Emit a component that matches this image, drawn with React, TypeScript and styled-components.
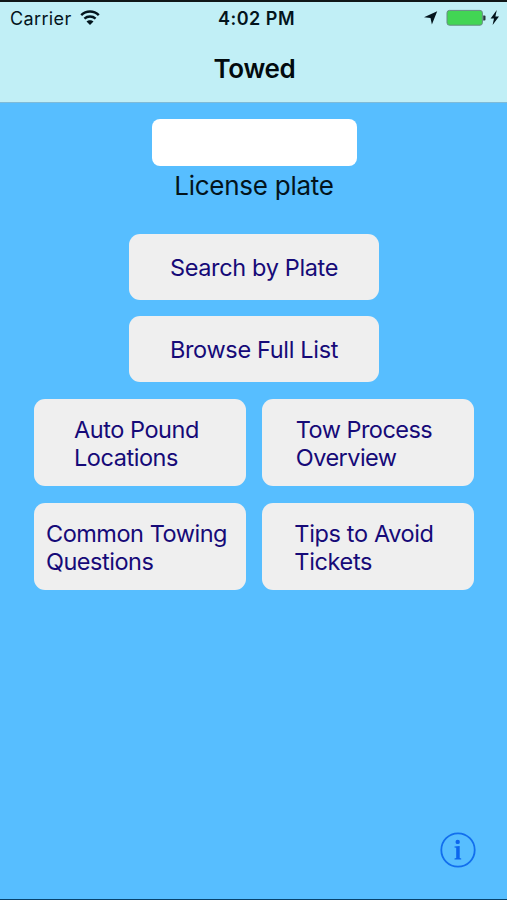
import React from "react";
import styled, { createGlobalStyle } from "styled-components";

const GlobalStyle = createGlobalStyle`
  * { box-sizing: border-box; }
  body { margin: 0; background: #57beff; }
`;

const Screen = styled.div`
  width: 507px;
  height: 900px;
  display: flex;
  flex-direction: column;
  overflow: hidden;
  background: #57beff;
  border-top: 2px solid #101718;
  border-bottom: 1px solid #07426b;
  font-family: Inter, "Liberation Sans", sans-serif;
  color: #03141c;
`;

const Header = styled.header`
  height: 101px;
  flex: none;
  background: #c1eff6;
  border-bottom: 1px solid #7fbbd8;
`;

const StatusBar = styled.div`
  height: 33px;
  display: grid;
  grid-template-columns: 1fr auto 1fr;
  align-items: center;
  padding: 0 7px 0 10px;
`;

const Carrier = styled.div`
  display: flex;
  align-items: center;
  gap: 8px;
  font-size: 18px;
  line-height: 22px;
  letter-spacing: 0.36px;

  svg {
    margin-bottom: 2px;
  }
`;

const Clock = styled.div`
  font-size: 18px;
  line-height: 22px;
  font-weight: 600;
  letter-spacing: 0.5px;
  padding-left: 3px;
`;

const Indicators = styled.div`
  display: flex;
  justify-content: flex-end;
  align-items: center;
  padding-bottom: 2px;
`;

const Title = styled.h1`
  margin: 18px 0 0 2px;
  font-size: 26px;
  line-height: 32px;
  font-weight: 600;
  letter-spacing: -0.3px;
  text-align: center;
  color: #020a0e;
`;

const Content = styled.main`
  flex: 1;
  display: flex;
  flex-direction: column;
  align-items: center;
  padding: 16px 33px 31px 34px;
`;

const PlateInput = styled.input`
  width: 205px;
  height: 47px;
  flex: none;
  padding: 0 12px;
  border: 0;
  outline: 0;
  border-radius: 8px;
  background: #fff;
  font: inherit;
  font-size: 24px;
`;

const PlateLabel = styled.label`
  margin: 4px 0 32px;
  font-size: 26px;
  line-height: 32px;
  letter-spacing: -0.25px;
`;

const PrimaryActions = styled.div`
  display: grid;
  grid-template-columns: 250px;
  grid-auto-rows: 66px;
  gap: 16px;
`;

const TopicGrid = styled.div`
  display: grid;
  grid-template-columns: 212px 212px;
  grid-auto-rows: 87px;
  gap: 17px 16px;
  margin-top: 17px;
`;

const ActionButton = styled.button`
  display: flex;
  align-items: center;
  justify-content: center;
  padding: 2px 0 0;
  border: 0;
  border-radius: 11px;
  background: #efefef;
  color: #160a78;
  font: inherit;
  font-size: 23.5px;
  font-weight: 430;
  line-height: 28px;
  text-align: left;
`;

const Caption = styled.span<{ $tracking: number; $shift?: number }>`
  white-space: pre;
  letter-spacing: ${(p) => p.$tracking}px;
  margin-left: ${(p) => p.$shift ?? 0}px;
`;

const InfoButton = styled.button`
  display: flex;
  align-self: flex-end;
  margin-top: auto;
  margin-right: -2px;
  padding: 0;
  border: 0;
  background: none;
`;

const WifiIcon = () => (
  <svg width="20" height="16" viewBox="0 0 20 16" fill="none">
    <path d="M1.2 5.1C6.2.3 13.8.3 18.8 5.1" stroke="#03141c" strokeWidth="2.5" />
    <path d="M4.4 8.6C7.6 5.7 12.4 5.7 15.6 8.6" stroke="#03141c" strokeWidth="2.4" />
    <path d="M6.5 11.6C8.4 9.8 11.6 9.8 13.5 11.6L10 15Z" fill="#03141c" />
  </svg>
);

const StatusIcons = () => (
  <svg width="78" height="22" viewBox="422 7 78 22">
    <path d="M437.2 11.2L431.9 24.5L430.5 18L424 17.3Z" fill="#03141c" />
    <rect x="447" y="10.4" width="35.4" height="14.8" rx="2.4" fill="#42d554" stroke="#668b83" strokeWidth="1" />
    <path d="M483.2 15.4H484.4Q485.5 15.4 485.5 16.5V19.4Q485.5 20.5 484.4 20.5H483.2Z" fill="#26363b" />
    <path d="M496.8 10L490.6 18.5H494L492.6 25L499 16.5H495.4Z" fill="#03141c" />
  </svg>
);

const InfoIcon = () => (
  <svg width="36" height="36" viewBox="0 0 36 36">
    <circle cx="18" cy="18" r="16.7" fill="none" stroke="#126fee" strokeWidth="1.8" />
    <circle cx="17.7" cy="9.9" r="2.2" fill="#0c66ee" />
    <path d="M14.5 14.5L19.7 14V26L21.2 26.4V27.4H14.5V26.4L16.2 26V15.7L14.5 15.4Z" fill="#0c66ee" />
  </svg>
);

const primary = [
  { text: "Search by Plate", tracking: -0.35 },
  { text: "Browse Full List", tracking: -0.33 },
];

const topics = [
  { text: "Auto Pound\nLocations", tracking: -0.45, shift: -7 },
  { text: "Tow Process\nOverview", tracking: -0.54, shift: -8 },
  { text: "Common Towing\nQuestions", tracking: -0.47, shift: -7 },
  { text: "Tips to Avoid\nTickets", tracking: -0.36, shift: -8 },
];

export default function App() {
  return (
    <Screen>
      <GlobalStyle />
      <Header>
        <StatusBar>
          <Carrier>
            Carrier
            <WifiIcon />
          </Carrier>
          <Clock>4:02 PM</Clock>
          <Indicators>
            <StatusIcons />
          </Indicators>
        </StatusBar>
        <Title>Towed</Title>
      </Header>
      <Content>
        <PlateInput id="plate" />
        <PlateLabel htmlFor="plate">License plate</PlateLabel>
        <PrimaryActions>
          {primary.map((a) => (
            <ActionButton key={a.text}>
              <Caption $tracking={a.tracking}>{a.text}</Caption>
            </ActionButton>
          ))}
        </PrimaryActions>
        <TopicGrid>
          {topics.map((a) => (
            <ActionButton key={a.text}>
              <Caption $tracking={a.tracking} $shift={a.shift}>{a.text}</Caption>
            </ActionButton>
          ))}
        </TopicGrid>
        <InfoButton aria-label="Info">
          <InfoIcon />
        </InfoButton>
      </Content>
    </Screen>
  );
}
